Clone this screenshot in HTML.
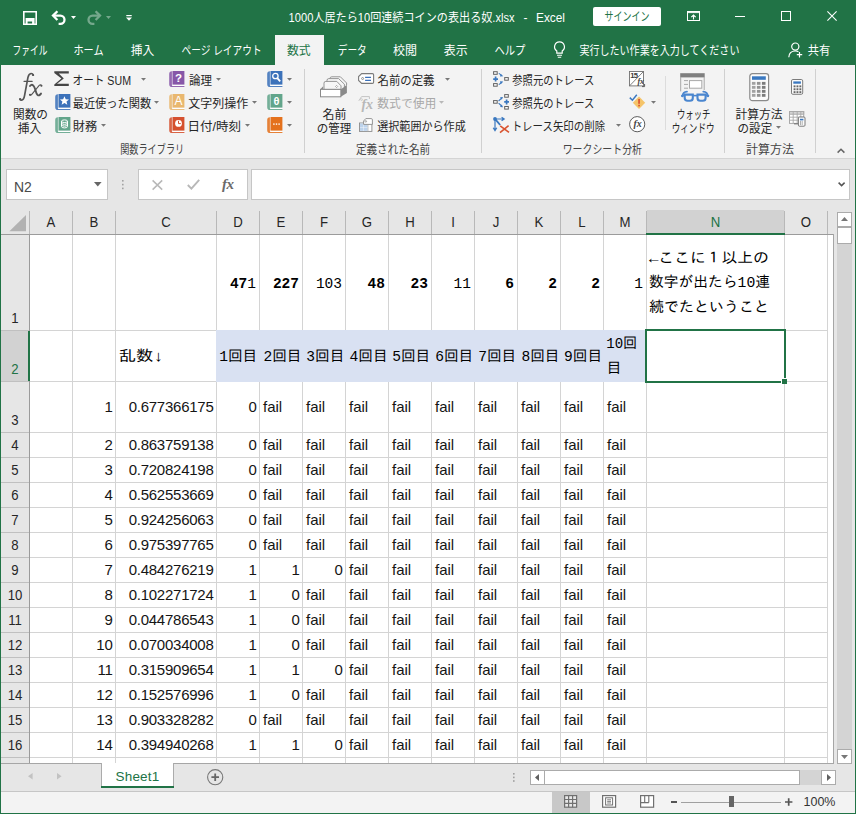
<!DOCTYPE html>
<html lang="ja"><head><meta charset="utf-8"><title>Excel</title>
<style>
html,body{margin:0;padding:0;background:#e6e6e6;}
body{width:856px;height:814px;overflow:hidden;font-family:"Liberation Sans",sans-serif;}
#app{position:relative;width:856px;height:814px;overflow:hidden;background:#e6e6e6;}
#app div,#app svg,#app span.h{position:absolute;box-sizing:border-box;}
#app svg{overflow:visible;}
.t{white-space:nowrap;color:#151515;font-size:15px;}
.r{text-align:right;}
.c{text-align:center;}
.h{color:transparent;overflow:hidden;white-space:nowrap;pointer-events:none;}
#jp{pointer-events:none;}
#jp text{font-family:"Liberation Sans","Noto Sans CJK JP",sans-serif;font-size:12px;white-space:pre;}
#jp text.m{font-family:"Liberation Mono","IPAGothic","Noto Sans CJK JP",monospace;font-size:15px;fill:#000;}

</style></head>
<body>
<div id="app">
<div style="left:0px;top:0px;width:856px;height:65px;background:#217346"></div>
<div style="left:275px;top:35px;width:49px;height:30px;background:#f3f3f3"></div>
<div style="left:1px;top:65px;width:854px;height:93px;background:#f3f3f3"></div>
<div style="left:1px;top:158px;width:854px;height:1px;background:#d4d4d4"></div>
<svg style="left:23px;top:11px" width="14" height="14" viewBox="0 0 14 14" ><path d="M0.8 0.8H13.2V13.2H0.8Z" fill="none" stroke="#fff" stroke-width="1.6"/><path d="M2.6 13.4V7H11.6V13.4H9.1V10.4H4.6V13.4Z" fill="#fff"/></svg>
<svg style="left:51px;top:10px" width="16" height="15" viewBox="0 0 16 15" ><path d="M2.4 5.6H9.4A4.1 4.1 0 0 1 9.4 13.8H7.6" fill="none" stroke="#fff" stroke-width="2.3"/><path d="M6.4 1.2L2 5.6L6.4 10" fill="none" stroke="#fff" stroke-width="2.3"/></svg>
<svg style="left:71px;top:15.9px" width="5" height="3" viewBox="0 0 5 3" ><path d="M0 0H5L2.5 3Z" fill="#fff"/></svg>
<svg style="left:86px;top:10px" width="16" height="15" viewBox="0 0 16 15" ><g opacity="0.38"><path d="M13.6 5.6H6.6A4.1 4.1 0 0 0 6.6 13.8H8.4" fill="none" stroke="#fff" stroke-width="2.3"/><path d="M9.6 1.2L14 5.6L9.6 10" fill="none" stroke="#fff" stroke-width="2.3"/></g></svg>
<svg style="left:106px;top:15.9px" width="5" height="3" viewBox="0 0 5 3" ><path d="M0 0H5L2.5 3Z" fill="#fff" opacity="0.38"/></svg>
<svg style="left:125.5px;top:15px" width="6" height="6" viewBox="0 0 6 6" ><rect x="0.3" y="0" width="5.4" height="1.2" fill="#fff"/><path d="M0 2.6H6L3 5.8Z" fill="#fff"/></svg>
<div style="left:593px;top:7px;width:68px;height:19px;background:#fff;border-radius:2px"></div>
<svg style="left:687px;top:11px" width="13" height="10" viewBox="0 0 13 10" ><rect x="0.5" y="0.5" width="12" height="9" fill="none" stroke="#fff"/><rect x="0.5" y="0.5" width="12" height="1.6" fill="#fff" opacity="0.9"/><path d="M6.5 8.5V4.2M4.3 6.2L6.5 4L8.7 6.2" fill="none" stroke="#fff" stroke-width="1.1"/></svg>
<svg style="left:735px;top:16px" width="10" height="1" viewBox="0 0 10 1" ><rect width="10" height="1" fill="#fff"/></svg>
<svg style="left:781px;top:11px" width="10" height="10" viewBox="0 0 10 10" ><rect x="0.5" y="0.5" width="9" height="9" fill="none" stroke="#fff"/></svg>
<svg style="left:827px;top:11px" width="10" height="10" viewBox="0 0 10 10" ><path d="M0.4 0.4L9.6 9.6M9.6 0.4L0.4 9.6" stroke="#fff" stroke-width="1.1" fill="none"/></svg>
<svg style="left:553px;top:41px" width="13" height="17" viewBox="0 0 13 17" ><path d="M6.5 0.9A4.9 4.9 0 0 0 3.8 9.9V12.2H9.2V9.9A4.9 4.9 0 0 0 6.5 0.9Z" fill="none" stroke="#fff" stroke-width="1.2"/><path d="M4 14.2H9M4.8 16.2H8.2" stroke="#fff" stroke-width="1.1"/></svg>
<svg style="left:788px;top:42px" width="15" height="16" viewBox="0 0 15 16" ><circle cx="7.3" cy="4.6" r="3.6" fill="none" stroke="#fff" stroke-width="1.2"/><path d="M0.8 15.2C1 10.8 3.6 9 7.3 9C8.6 9 9.6 9.2 10.4 9.6" fill="none" stroke="#fff" stroke-width="1.2"/><path d="M11.5 10V15.4M8.8 12.7H14.2" stroke="#fff" stroke-width="1.2"/></svg>
<svg style="left:18px;top:72px" width="26" height="30" viewBox="0 0 26 30" ><g fill="none" stroke="#555" stroke-linecap="round"><path d="M15.3 3.1Q14.6 1.4 13 1.5Q10.8 1.7 9.9 5.6L6.6 23.4Q5.8 28 3.6 28.2Q2.3 28.3 1.9 27.2" stroke-width="1.7"/><path d="M6 9.3H14.2" stroke-width="1.2"/><path d="M12 14Q13.4 12 15.2 13.4Q16.4 14.6 17.4 18Q18.4 22 19.6 23Q21.2 24.2 23 21.6" stroke-width="1.9"/><path d="M23.6 13.7Q22.6 12.2 21.2 13.4L14 22.2Q12.8 23.8 11.8 22.8" stroke-width="1.1"/></g><circle cx="15" cy="3" r="1.1" fill="#555"/><circle cx="2.2" cy="27" r="1.1" fill="#555"/><circle cx="23.4" cy="13.7" r="1.05" fill="#555"/><circle cx="12" cy="22.7" r="1.05" fill="#555"/></svg>
<svg style="left:54px;top:71px" width="15" height="15.2" viewBox="0 0 15 15.2" ><path d="M0.3 0.2H14.8V2.4H4.8L9.8 7.5L3 12.8H14.8V15.1H0.3V13.6L7.4 7.5L0.3 1.9Z" fill="#454545"/></svg>
<svg style="left:141px;top:78.1px" width="5" height="3" viewBox="0 0 5 3" ><path d="M0 0H5L2.5 2.8Z" fill="#777"/></svg>
<svg style="left:55px;top:94px" width="16" height="16" viewBox="0 0 16 16" ><path d="M2.9 0.2Q0.2 0.2 0.2 2.9V13.2Q0.2 16 3 16H15.4V15H3.6Q2.9 15 2.9 14.2Z" fill="#3c72ba" opacity="0.88"/><rect x="3.5" y="13.6" width="11.9" height="1.4" fill="#fff"/><rect x="3.5" y="0" width="11.9" height="13.6" fill="#3c72ba"/><path d="M9.45 2.2L10.75 5.3L14 5.5L11.5 7.6L12.3 10.8L9.45 9.1L6.6 10.8L7.4 7.6L4.9 5.5L8.15 5.3Z" fill="#fff"/></svg>
<svg style="left:154px;top:101.1px" width="5" height="3" viewBox="0 0 5 3" ><path d="M0 0H5L2.5 2.8Z" fill="#777"/></svg>
<svg style="left:54.6px;top:117px" width="16" height="16" viewBox="0 0 16 16" ><path d="M2.9 0.2Q0.2 0.2 0.2 2.9V13.2Q0.2 16 3 16H15.4V15H3.6Q2.9 15 2.9 14.2Z" fill="#62a58b" opacity="0.88"/><rect x="3.5" y="13.6" width="11.9" height="1.4" fill="#fff"/><rect x="3.5" y="0" width="11.9" height="13.6" fill="#62a58b"/><g fill="none" stroke="#fff" stroke-width="1"><ellipse cx="9.5" cy="4.2" rx="3" ry="1.3"/><path d="M6.5 4.2V9.6A3 1.3 0 0 0 12.5 9.6V4.2M6.5 6A3 1.3 0 0 0 12.5 6M6.5 7.8A3 1.3 0 0 0 12.5 7.8"/></g></svg>
<svg style="left:101px;top:124.1px" width="5" height="3" viewBox="0 0 5 3" ><path d="M0 0H5L2.5 2.8Z" fill="#777"/></svg>
<svg style="left:169px;top:70.9px" width="16" height="16" viewBox="0 0 16 16" ><path d="M2.9 0.2Q0.2 0.2 0.2 2.9V13.2Q0.2 16 3 16H15.4V15H3.6Q2.9 15 2.9 14.2Z" fill="#8757a8" opacity="0.88"/><rect x="3.5" y="13.6" width="11.9" height="1.4" fill="#fff"/><rect x="3.5" y="0" width="11.9" height="13.6" fill="#8757a8"/><text x="9.5" y="10.8" font-family="Liberation Sans" font-weight="bold" font-size="11.5" fill="#fff" text-anchor="middle">?</text></svg>
<svg style="left:216px;top:78.1px" width="5" height="3" viewBox="0 0 5 3" ><path d="M0 0H5L2.5 2.8Z" fill="#777"/></svg>
<svg style="left:169px;top:94px" width="16" height="16" viewBox="0 0 16 16" ><path d="M2.9 0.2Q0.2 0.2 0.2 2.9V13.2Q0.2 16 3 16H15.4V15H3.6Q2.9 15 2.9 14.2Z" fill="#e9b76e" opacity="0.88"/><rect x="3.5" y="13.6" width="11.9" height="1.4" fill="#fff"/><rect x="3.5" y="0" width="11.9" height="13.6" fill="#e9b76e"/><text x="9.5" y="10.9" font-family="Liberation Sans" font-size="12" fill="#fff" text-anchor="middle">A</text></svg>
<svg style="left:252px;top:101.1px" width="5" height="3" viewBox="0 0 5 3" ><path d="M0 0H5L2.5 2.8Z" fill="#777"/></svg>
<svg style="left:169px;top:117px" width="16" height="16" viewBox="0 0 16 16" ><path d="M2.9 0.2Q0.2 0.2 0.2 2.9V13.2Q0.2 16 3 16H15.4V15H3.6Q2.9 15 2.9 14.2Z" fill="#d5502e" opacity="0.88"/><rect x="3.5" y="13.6" width="11.9" height="1.4" fill="#fff"/><rect x="3.5" y="0" width="11.9" height="13.6" fill="#d5502e"/><circle cx="9.5" cy="6.4" r="3.4" fill="#fff"/><path d="M9.5 3.8V6.6H11.8" fill="none" stroke="#d5502e" stroke-width="1"/></svg>
<svg style="left:245px;top:124.1px" width="5" height="3" viewBox="0 0 5 3" ><path d="M0 0H5L2.5 2.8Z" fill="#777"/></svg>
<svg style="left:267px;top:70.9px" width="16" height="16" viewBox="0 0 16 16" ><path d="M2.9 0.2Q0.2 0.2 0.2 2.9V13.2Q0.2 16 3 16H15.4V15H3.6Q2.9 15 2.9 14.2Z" fill="#3c72ba" opacity="0.88"/><rect x="3.5" y="13.6" width="11.9" height="1.4" fill="#fff"/><rect x="3.5" y="0" width="11.9" height="13.6" fill="#3c72ba"/><circle cx="8.4" cy="5" r="2.7" fill="none" stroke="#fff" stroke-width="1.3"/><path d="M10.3 7.1L13.2 10.4" stroke="#fff" stroke-width="1.8"/></svg>
<svg style="left:287px;top:78.1px" width="5" height="3" viewBox="0 0 5 3" ><path d="M0 0H5L2.5 2.8Z" fill="#777"/></svg>
<svg style="left:267px;top:94px" width="16" height="16" viewBox="0 0 16 16" ><path d="M2.9 0.2Q0.2 0.2 0.2 2.9V13.2Q0.2 16 3 16H15.4V15H3.6Q2.9 15 2.9 14.2Z" fill="#62a58b" opacity="0.88"/><rect x="3.5" y="13.6" width="11.9" height="1.4" fill="#fff"/><rect x="3.5" y="0" width="11.9" height="13.6" fill="#62a58b"/><text x="9.5" y="10.9" font-family="Liberation Sans" font-weight="bold" font-size="11" fill="#fff" text-anchor="middle">θ</text></svg>
<svg style="left:287px;top:101.1px" width="5" height="3" viewBox="0 0 5 3" ><path d="M0 0H5L2.5 2.8Z" fill="#777"/></svg>
<svg style="left:267px;top:117px" width="16" height="16" viewBox="0 0 16 16" ><path d="M2.9 0.2Q0.2 0.2 0.2 2.9V13.2Q0.2 16 3 16H15.4V15H3.6Q2.9 15 2.9 14.2Z" fill="#e4711c" opacity="0.88"/><rect x="3.5" y="13.6" width="11.9" height="1.4" fill="#fff"/><rect x="3.5" y="0" width="11.9" height="13.6" fill="#e4711c"/><rect x="6.2" y="6.4" width="1.4" height="1.4" fill="#fff"/><rect x="8.8" y="6.4" width="1.4" height="1.4" fill="#fff"/><rect x="11.4" y="6.4" width="1.4" height="1.4" fill="#fff"/></svg>
<svg style="left:287px;top:124.1px" width="5" height="3" viewBox="0 0 5 3" ><path d="M0 0H5L2.5 2.8Z" fill="#777"/></svg>
<div style="left:304px;top:69px;width:1px;height:84px;background:#d0d0d0"></div>
<svg style="left:320px;top:76px" width="28" height="22" viewBox="0 0 28 22" ><g fill="#f6f6f6" stroke="#8a8a8a" stroke-width="0.9"><path d="M10 4V2.6Q10 0.8 11.8 0.8H20.4L26.6 7V9"/><path d="M7 6.5V4.4Q7 2.6 8.8 2.6H18.6L24.4 8.2V11"/><path d="M4 13.4V7.2Q4 5.4 5.8 5.4H16.8L21 9.8V13.4Z"/></g><path d="M16.6 9.4L17.7 10.5L16.6 11.6L15.5 10.5Z" fill="#fff" stroke="#8a8a8a" stroke-width="0.7"/><path d="M20.8 13.4L26.9 8.7V17L20.8 20.8Z" fill="#8a8a8a"/><path d="M0.5 13L3.2 10.2V13Z" fill="#8a8a8a"/><rect x="0.5" y="13.4" width="20.3" height="7.4" fill="#fff" stroke="#8a8a8a" stroke-width="1"/></svg>
<svg style="left:358px;top:73px" width="16.5" height="11" viewBox="0 0 16.5 11" ><path d="M3.7 0.6H14.4Q15.6 0.6 15.6 1.8V9.2Q15.6 10.4 14.4 10.4H3.7L0.6 7.4V3.6Z" fill="#fff" stroke="#7a7a7a" stroke-width="1.1"/><circle cx="4.6" cy="5.5" r="1" fill="none" stroke="#7a7a7a" stroke-width="0.8"/><path d="M7.1 4.4H13M7.1 7.3H13" stroke="#3c72ba" stroke-width="1.3"/></svg>
<svg style="left:445px;top:78.1px" width="5" height="3" viewBox="0 0 5 3" ><path d="M0 0H5L2.5 2.8Z" fill="#777"/></svg>
<svg style="left:358px;top:95.5px" width="16" height="15" viewBox="0 0 16 15" ><g><path d="M0.8 4.8L3.6 0.6H11.4V3" fill="none" stroke="#c4c4c4"/><circle cx="3.6" cy="3.6" r="0.9" fill="none" stroke="#c4c4c4" stroke-width="0.8"/><text x="3.4" y="12.8" font-family="Liberation Serif" font-style="italic" font-weight="bold" font-size="14" fill="#b8b8b8">fx</text></g></svg>
<svg style="left:439.25px;top:101.1px" width="5" height="3" viewBox="0 0 5 3" ><path d="M0 0H5L2.5 2.8Z" fill="#b8b8b8"/></svg>
<svg style="left:359px;top:118px" width="14" height="14" viewBox="0 0 14 14" ><rect x="0.5" y="5" width="12.4" height="8.4" fill="#fff" stroke="#8a8a8a" stroke-width="0.9"/><rect x="1" y="5.5" width="3.6" height="3.5" fill="#bdd3ec"/><rect x="5" y="5.5" width="3.6" height="3.5" fill="#bdd3ec"/><rect x="1" y="9.4" width="3.6" height="3.5" fill="#bdd3ec"/><rect x="5" y="9.4" width="3.6" height="3.5" fill="#bdd3ec"/><path d="M9 5V13.4" stroke="#b0b0b0" stroke-width="0.7"/><path d="M4.6 6.4V3L6.8 0.6H12.2Q13.4 0.6 13.4 1.8V6.4Z" fill="#fff" stroke="#8a8a8a" stroke-width="0.9"/><circle cx="6.8" cy="3.4" r="0.8" fill="none" stroke="#8a8a8a" stroke-width="0.7"/></svg>
<div style="left:481px;top:69px;width:1px;height:84px;background:#d0d0d0"></div>
<svg style="left:493px;top:71px" width="16" height="16" viewBox="0 0 16 16" ><rect x="0.6" y="0.7" width="3.6" height="2.6" fill="#fff" stroke="#606060" stroke-width="1"/><rect x="0.6" y="12.6" width="3.6" height="2.6" fill="#fff" stroke="#606060" stroke-width="1"/><rect x="11.7" y="6.6" width="3.6" height="2.6" fill="#fff" stroke="#606060" stroke-width="1"/><path d="M5.8 2.4L9.2 4.6M5.8 13.6L9.2 11.2" stroke="#3a78c0" stroke-width="1.1"/><path d="M7.6 3L10.2 5.2L7 5.6ZM7.6 13L10.2 10.6L7 10.2Z" fill="#3a78c0"/><path d="M2.6 5.6V10.6M0.2 8.1H5" stroke="#3a78c0" stroke-width="1.7"/></svg>
<svg style="left:493px;top:94px" width="16" height="16" viewBox="0 0 16 16" ><rect x="0.6" y="6.6" width="3.6" height="2.6" fill="#fff" stroke="#606060" stroke-width="1"/><rect x="11.7" y="0.6" width="3.6" height="2.6" fill="#fff" stroke="#606060" stroke-width="1"/><rect x="11.7" y="12.5" width="3.6" height="2.6" fill="#fff" stroke="#606060" stroke-width="1"/><path d="M5.6 7L8.6 4.2M5.6 9.2L8.6 12" stroke="#3a78c0" stroke-width="1.1"/><path d="M7 3.2L10 3L8.8 5.8ZM7 13L10 13.2L8.8 10.4Z" fill="#3a78c0"/><path d="M13.6 5.4V10.4M11.2 7.9H16" stroke="#3a78c0" stroke-width="1.7"/></svg>
<svg style="left:493px;top:117px" width="16.5" height="16" viewBox="0 0 16.5 16" ><circle cx="2" cy="2" r="1.9" fill="#3a78c0"/><path d="M2 2H10.4M8.6 0.2L11.2 2L8.6 3.8M2 2V13M0.2 10.8L2 13.6L3.8 10.8" fill="none" stroke="#3a78c0" stroke-width="1.2"/><path d="M2.4 2.4L7.2 8" stroke="#3a78c0" stroke-width="1.8"/><path d="M7.2 8.8L16 15.4M15.6 8.6L7 15.6" stroke="#d9532f" stroke-width="1.6"/></svg>
<svg style="left:616.25px;top:124.1px" width="5" height="3" viewBox="0 0 5 3" ><path d="M0 0H5L2.5 2.8Z" fill="#777"/></svg>
<svg style="left:629.4px;top:71px" width="17" height="16" viewBox="0 0 17 16" ><rect x="0.5" y="0.5" width="14" height="14.4" fill="#fff" stroke="#707070" stroke-width="0.9"/><path d="M0.5 14.9L14.5 0.5" stroke="#707070" stroke-width="0.9"/><text x="1.2" y="7.2" font-family="Liberation Sans" font-size="7.6" font-weight="bold" fill="#3a3a3a" letter-spacing="-0.6">15</text><text x="8.4" y="13.4" font-family="Liberation Serif" font-style="italic" font-size="8" font-weight="bold" fill="#3a3a3a">fx</text><path d="M13 15.6H15.6V13" fill="none" stroke="#5a5a5a" stroke-width="1"/></svg>
<svg style="left:629px;top:94px" width="17" height="16" viewBox="0 0 17 16" ><path d="M0.8 3.6L3.4 6.2L7.8 0.8" fill="none" stroke="#3a78c0" stroke-width="1.5"/><path d="M10 2.6L16.2 8.8L10 15L3.8 8.8Z" fill="#f5c469"/><rect x="9.3" y="5" width="1.5" height="4.8" fill="#d9452b"/><rect x="9.3" y="10.8" width="1.5" height="1.6" fill="#d9452b"/></svg>
<svg style="left:651.25px;top:101.1px" width="5" height="3" viewBox="0 0 5 3" ><path d="M0 0H5L2.5 2.8Z" fill="#777"/></svg>
<svg style="left:629px;top:116.4px" width="16.4" height="16.4" viewBox="0 0 16.4 16.4" ><circle cx="8.2" cy="8.2" r="7.6" fill="#fff" stroke="#5a5a5a" stroke-width="1"/><text x="4.4" y="11.4" font-family="Liberation Serif" font-style="italic" font-weight="bold" font-size="10" fill="#444">fx</text></svg>
<div style="left:665px;top:76px;width:1px;height:54px;background:#dcdcdc"></div>
<svg style="left:680px;top:73px" width="30" height="29" viewBox="0 0 30 29" ><rect x="0.2" y="0.2" width="24.5" height="4.2" fill="#7f7f7f"/><path d="M0.7 4V18.4M24.2 4V17" stroke="#a8a8a8" fill="none"/><rect x="9.5" y="7.6" width="12.3" height="7.6" fill="#fff" stroke="#a8a8a8"/><path d="M4 7.6H8M4 11.4H8M4 15.2H8" stroke="#a8a8a8"/><g fill="#f3f3f3" stroke="#4a86cf" stroke-width="2.1"><path d="M4.7 21.6H12.8V25Q12.8 27.8 10 27.8H7.5Q4.7 27.8 4.7 25Z"/><path d="M17.5 21.6H25.6V25Q25.6 27.8 22.8 27.8H20.3Q17.5 27.8 17.5 25Z"/></g><path d="M12.8 22.6H17.5" stroke="#4a86cf" stroke-width="1.6"/><path d="M2.4 23.4Q2.8 18.8 7 18.6M27.9 23.4Q27.5 18.8 23.3 18.6" fill="none" stroke="#4a86cf" stroke-width="1.8" stroke-linecap="round"/><path d="M1.2 23L4.7 22.4M29.1 23L25.6 22.4" stroke="#4a86cf" stroke-width="1.8"/></svg>
<div style="left:724px;top:69px;width:1px;height:84px;background:#d0d0d0"></div>
<svg style="left:749px;top:73px" width="21" height="28.5" viewBox="0 0 21 28.5" ><rect x="0.8" y="0.7" width="18.8" height="27" rx="2.6" fill="#fbfbfb" stroke="#8a8a8a" stroke-width="1.2"/><rect x="3" y="3.3" width="13.8" height="3.5" fill="#3a78c0"/><rect x="2.9" y="8.9" width="3.6" height="2.9" fill="#a2a2a2"/><rect x="2.9" y="12.9" width="3.6" height="2.9" fill="#a2a2a2"/><rect x="2.9" y="16.9" width="3.6" height="2.9" fill="#a2a2a2"/><rect x="2.9" y="20.9" width="3.6" height="2.9" fill="#a2a2a2"/><rect x="7.9" y="8.9" width="3.6" height="2.9" fill="#939393"/><rect x="7.9" y="12.9" width="3.6" height="2.9" fill="#939393"/><rect x="7.9" y="16.9" width="3.6" height="2.9" fill="#939393"/><rect x="7.9" y="20.9" width="3.6" height="2.9" fill="#939393"/><rect x="12.9" y="8.9" width="3.6" height="2.9" fill="#7c7c7c"/><rect x="12.9" y="12.9" width="3.6" height="2.9" fill="#7c7c7c"/><rect x="12.9" y="16.9" width="3.6" height="2.9" fill="#7c7c7c"/><rect x="12.9" y="20.9" width="3.6" height="2.9" fill="#7c7c7c"/></svg>
<svg style="left:776.25px;top:126.1px" width="5" height="3" viewBox="0 0 5 3" ><path d="M0 0H5L2.5 2.8Z" fill="#777"/></svg>
<svg style="left:791px;top:79px" width="12.2" height="16" viewBox="0 0 12.2 16" ><rect x="0.5" y="0.5" width="11.2" height="14.8" rx="1.4" fill="#fbfbfb" stroke="#7a7a7a"/><rect x="2.3" y="2.4" width="7.6" height="2.3" fill="#3a78c0"/><rect x="2.6" y="6.4" width="1.9" height="1.9" fill="#666"/><rect x="2.6" y="9.3" width="1.9" height="1.9" fill="#666"/><rect x="2.6" y="12.2" width="1.9" height="1.9" fill="#666"/><rect x="5.5" y="6.4" width="1.9" height="1.9" fill="#666"/><rect x="5.5" y="9.3" width="1.9" height="1.9" fill="#666"/><rect x="5.5" y="12.2" width="1.9" height="1.9" fill="#666"/><rect x="8.4" y="6.4" width="1.9" height="1.9" fill="#666"/><rect x="8.4" y="9.3" width="1.9" height="1.9" fill="#666"/><rect x="8.4" y="12.2" width="1.9" height="1.9" fill="#666"/></svg>
<svg style="left:789px;top:110.5px" width="17" height="16" viewBox="0 0 17 16" ><rect x="0.5" y="0.6" width="14.2" height="11.8" fill="#fff" stroke="#a8a8a8"/><rect x="0.5" y="0.6" width="14.2" height="2.6" fill="#d8d8d8" stroke="#a8a8a8"/><path d="M4.2 0.6V12.4M8.2 0.6V12.4M11.8 0.6V12.4M0.5 6.2H14.7M0.5 9.2H14.7" stroke="#a8a8a8" stroke-width="0.9"/><path d="M5 12.8H9" stroke="#7a7a7a" stroke-width="1.2"/><rect x="9.4" y="6" width="6.6" height="9.2" rx="1" fill="#fbfbfb" stroke="#7a7a7a"/><rect x="11" y="7.8" width="3.4" height="1.6" fill="#3a78c0"/><path d="M11 11H14.4M11 13H14.4" stroke="#666" stroke-width="1" stroke-dasharray="1 0.7"/></svg>
<div style="left:815px;top:69px;width:1px;height:84px;background:#d0d0d0"></div>
<svg style="left:836.5px;top:147.5px" width="8" height="5" viewBox="0 0 8 5" ><path d="M0.6 4.6L4 1.2L7.4 4.6" fill="none" stroke="#666" stroke-width="1.5"/></svg>
<div style="left:6px;top:169px;width:102px;height:31px;background:#fff;border:1px solid #c6c6c6"></div>
<div class="t" style="left:14px;top:177.8px;width:40px;height:18px;line-height:18px;font-size:15.5px;transform:scaleX(0.9);transform-origin:0 50%;color:#4a4a4a">N2</div>
<svg style="left:94px;top:182px" width="8" height="5" viewBox="0 0 8 5" ><path d="M0 0H7.6L3.8 4.4Z" fill="#666"/></svg>
<svg style="left:122px;top:179.5px" width="2" height="10" viewBox="0 0 2 10" ><rect x="0" y="0" width="1.6" height="1.6" fill="#a2a2a2"/><rect x="0" y="3.8" width="1.6" height="1.6" fill="#a2a2a2"/><rect x="0" y="7.6" width="1.6" height="1.6" fill="#a2a2a2"/></svg>
<div style="left:138px;top:169px;width:110px;height:31px;background:#fff;border:1px solid #c6c6c6"></div>
<svg style="left:152px;top:179.5px" width="11" height="10" viewBox="0 0 11 10" ><path d="M0.6 0.4L10.2 9.6M10.2 0.4L0.6 9.6" stroke="#b8b8b8" stroke-width="1.5" fill="none"/></svg>
<svg style="left:187px;top:179px" width="13" height="11" viewBox="0 0 13 11" ><path d="M0.8 6L4.4 9.6L12.2 0.8" stroke="#b8b8b8" stroke-width="1.9" fill="none"/></svg>
<div class="t" style="left:222px;top:174px;width:16px;height:20px;line-height:20px;font-family:'Liberation Serif',serif;font-style:italic;font-weight:bold;font-size:15px;color:#6a6a6a;letter-spacing:-0.5px">fx</div>
<div style="left:251px;top:169px;width:599px;height:31px;background:#fff;border:1px solid #c6c6c6"></div>
<svg style="left:838px;top:182px" width="8" height="5" viewBox="0 0 8 5" ><path d="M0.6 0.6L3.6 3.6L6.6 0.6" fill="none" stroke="#555" stroke-width="1.5"/></svg>
<div style="left:30px;top:235px;width:804px;height:528px;background:#fff"></div>
<div style="left:72px;top:235px;width:1px;height:528px;background:#d4d4d4"></div>
<div style="left:115px;top:235px;width:1px;height:528px;background:#d4d4d4"></div>
<div style="left:216px;top:235px;width:1px;height:528px;background:#d4d4d4"></div>
<div style="left:259px;top:235px;width:1px;height:96px;background:#d4d4d4"></div>
<div style="left:259px;top:381px;width:1px;height:382px;background:#d4d4d4"></div>
<div style="left:302px;top:235px;width:1px;height:96px;background:#d4d4d4"></div>
<div style="left:302px;top:381px;width:1px;height:382px;background:#d4d4d4"></div>
<div style="left:345px;top:235px;width:1px;height:96px;background:#d4d4d4"></div>
<div style="left:345px;top:381px;width:1px;height:382px;background:#d4d4d4"></div>
<div style="left:388px;top:235px;width:1px;height:96px;background:#d4d4d4"></div>
<div style="left:388px;top:381px;width:1px;height:382px;background:#d4d4d4"></div>
<div style="left:431px;top:235px;width:1px;height:96px;background:#d4d4d4"></div>
<div style="left:431px;top:381px;width:1px;height:382px;background:#d4d4d4"></div>
<div style="left:474px;top:235px;width:1px;height:96px;background:#d4d4d4"></div>
<div style="left:474px;top:381px;width:1px;height:382px;background:#d4d4d4"></div>
<div style="left:517px;top:235px;width:1px;height:96px;background:#d4d4d4"></div>
<div style="left:517px;top:381px;width:1px;height:382px;background:#d4d4d4"></div>
<div style="left:560px;top:235px;width:1px;height:96px;background:#d4d4d4"></div>
<div style="left:560px;top:381px;width:1px;height:382px;background:#d4d4d4"></div>
<div style="left:603px;top:235px;width:1px;height:96px;background:#d4d4d4"></div>
<div style="left:603px;top:381px;width:1px;height:382px;background:#d4d4d4"></div>
<div style="left:646px;top:235px;width:1px;height:528px;background:#d4d4d4"></div>
<div style="left:784px;top:235px;width:1px;height:528px;background:#d4d4d4"></div>
<div style="left:827px;top:235px;width:1px;height:528px;background:#d4d4d4"></div>
<div style="left:30px;top:330px;width:804px;height:1px;background:#d4d4d4"></div>
<div style="left:30px;top:381px;width:804px;height:1px;background:#d4d4d4"></div>
<div style="left:30px;top:432px;width:804px;height:1px;background:#d4d4d4"></div>
<div style="left:30px;top:457px;width:804px;height:1px;background:#d4d4d4"></div>
<div style="left:30px;top:482px;width:804px;height:1px;background:#d4d4d4"></div>
<div style="left:30px;top:507px;width:804px;height:1px;background:#d4d4d4"></div>
<div style="left:30px;top:532px;width:804px;height:1px;background:#d4d4d4"></div>
<div style="left:30px;top:557px;width:804px;height:1px;background:#d4d4d4"></div>
<div style="left:30px;top:582px;width:804px;height:1px;background:#d4d4d4"></div>
<div style="left:30px;top:607px;width:804px;height:1px;background:#d4d4d4"></div>
<div style="left:30px;top:632px;width:804px;height:1px;background:#d4d4d4"></div>
<div style="left:30px;top:657px;width:804px;height:1px;background:#d4d4d4"></div>
<div style="left:30px;top:682px;width:804px;height:1px;background:#d4d4d4"></div>
<div style="left:30px;top:707px;width:804px;height:1px;background:#d4d4d4"></div>
<div style="left:30px;top:732px;width:804px;height:1px;background:#d4d4d4"></div>
<div style="left:30px;top:757px;width:804px;height:1px;background:#d4d4d4"></div>
<div style="left:216px;top:330px;width:430px;height:52px;background:#d9e1f2"></div>
<div style="left:30px;top:210px;width:42px;height:24px;background:#e6e6e6"></div>
<div style="left:72px;top:211px;width:1px;height:23px;background:#b8b8b8"></div>
<div class="t c" style="left:30px;top:212px;width:42px;height:20px;line-height:20px;font-size:15px;transform:scaleX(0.88);color:#262626">A</div>
<div style="left:73px;top:210px;width:42px;height:24px;background:#e6e6e6"></div>
<div style="left:115px;top:211px;width:1px;height:23px;background:#b8b8b8"></div>
<div class="t c" style="left:73px;top:212px;width:42px;height:20px;line-height:20px;font-size:15px;transform:scaleX(0.88);color:#262626">B</div>
<div style="left:116px;top:210px;width:100px;height:24px;background:#e6e6e6"></div>
<div style="left:216px;top:211px;width:1px;height:23px;background:#b8b8b8"></div>
<div class="t c" style="left:116px;top:212px;width:100px;height:20px;line-height:20px;font-size:15px;transform:scaleX(0.88);color:#262626">C</div>
<div style="left:217px;top:210px;width:42px;height:24px;background:#e6e6e6"></div>
<div style="left:259px;top:211px;width:1px;height:23px;background:#b8b8b8"></div>
<div class="t c" style="left:217px;top:212px;width:42px;height:20px;line-height:20px;font-size:15px;transform:scaleX(0.88);color:#262626">D</div>
<div style="left:260px;top:210px;width:42px;height:24px;background:#e6e6e6"></div>
<div style="left:302px;top:211px;width:1px;height:23px;background:#b8b8b8"></div>
<div class="t c" style="left:260px;top:212px;width:42px;height:20px;line-height:20px;font-size:15px;transform:scaleX(0.88);color:#262626">E</div>
<div style="left:303px;top:210px;width:42px;height:24px;background:#e6e6e6"></div>
<div style="left:345px;top:211px;width:1px;height:23px;background:#b8b8b8"></div>
<div class="t c" style="left:303px;top:212px;width:42px;height:20px;line-height:20px;font-size:15px;transform:scaleX(0.88);color:#262626">F</div>
<div style="left:346px;top:210px;width:42px;height:24px;background:#e6e6e6"></div>
<div style="left:388px;top:211px;width:1px;height:23px;background:#b8b8b8"></div>
<div class="t c" style="left:346px;top:212px;width:42px;height:20px;line-height:20px;font-size:15px;transform:scaleX(0.88);color:#262626">G</div>
<div style="left:389px;top:210px;width:42px;height:24px;background:#e6e6e6"></div>
<div style="left:431px;top:211px;width:1px;height:23px;background:#b8b8b8"></div>
<div class="t c" style="left:389px;top:212px;width:42px;height:20px;line-height:20px;font-size:15px;transform:scaleX(0.88);color:#262626">H</div>
<div style="left:432px;top:210px;width:42px;height:24px;background:#e6e6e6"></div>
<div style="left:474px;top:211px;width:1px;height:23px;background:#b8b8b8"></div>
<div class="t c" style="left:432px;top:212px;width:42px;height:20px;line-height:20px;font-size:15px;transform:scaleX(0.88);color:#262626">I</div>
<div style="left:475px;top:210px;width:42px;height:24px;background:#e6e6e6"></div>
<div style="left:517px;top:211px;width:1px;height:23px;background:#b8b8b8"></div>
<div class="t c" style="left:475px;top:212px;width:42px;height:20px;line-height:20px;font-size:15px;transform:scaleX(0.88);color:#262626">J</div>
<div style="left:518px;top:210px;width:42px;height:24px;background:#e6e6e6"></div>
<div style="left:560px;top:211px;width:1px;height:23px;background:#b8b8b8"></div>
<div class="t c" style="left:518px;top:212px;width:42px;height:20px;line-height:20px;font-size:15px;transform:scaleX(0.88);color:#262626">K</div>
<div style="left:561px;top:210px;width:42px;height:24px;background:#e6e6e6"></div>
<div style="left:603px;top:211px;width:1px;height:23px;background:#b8b8b8"></div>
<div class="t c" style="left:561px;top:212px;width:42px;height:20px;line-height:20px;font-size:15px;transform:scaleX(0.88);color:#262626">L</div>
<div style="left:604px;top:210px;width:42px;height:24px;background:#e6e6e6"></div>
<div style="left:646px;top:211px;width:1px;height:23px;background:#b8b8b8"></div>
<div class="t c" style="left:604px;top:212px;width:42px;height:20px;line-height:20px;font-size:15px;transform:scaleX(0.88);color:#262626">M</div>
<div style="left:647px;top:210px;width:137px;height:24px;background:#d2d2d2"></div>
<div style="left:784px;top:211px;width:1px;height:23px;background:#b8b8b8"></div>
<div class="t c" style="left:647px;top:212px;width:137px;height:20px;line-height:20px;font-size:15px;transform:scaleX(0.88);color:#217346">N</div>
<div style="left:785px;top:210px;width:42px;height:24px;background:#e6e6e6"></div>
<div style="left:827px;top:211px;width:1px;height:23px;background:#b8b8b8"></div>
<div class="t c" style="left:785px;top:212px;width:42px;height:20px;line-height:20px;font-size:15px;transform:scaleX(0.88);color:#262626">O</div>
<div style="left:29px;top:211px;width:1px;height:23px;background:#b8b8b8"></div>
<div style="left:0px;top:234px;width:834px;height:1px;background:#9b9b9b"></div>
<div style="left:646px;top:233px;width:139px;height:2px;background:#217346"></div>
<svg style="left:9px;top:214.5px" width="17" height="16" viewBox="0 0 17 16" ><path d="M17 0V16.2H0.4Z" fill="#b2b2b2"/></svg>
<div style="left:1px;top:235px;width:28px;height:95px;background:#e6e6e6"></div>
<div style="left:1px;top:330px;width:28px;height:1px;background:#c0c0c0"></div>
<div class="t c" style="left:1px;top:308.5px;width:28px;height:18px;line-height:18px;font-size:15.5px;transform:scaleX(0.85);color:#262626">1</div>
<div style="left:1px;top:331px;width:28px;height:50px;background:#d2d2d2"></div>
<div style="left:1px;top:381px;width:28px;height:1px;background:#c0c0c0"></div>
<div class="t c" style="left:1px;top:359.5px;width:28px;height:18px;line-height:18px;font-size:15.5px;transform:scaleX(0.85);color:#217346">2</div>
<div style="left:1px;top:382px;width:28px;height:50px;background:#e6e6e6"></div>
<div style="left:1px;top:432px;width:28px;height:1px;background:#c0c0c0"></div>
<div class="t c" style="left:1px;top:410.5px;width:28px;height:18px;line-height:18px;font-size:15.5px;transform:scaleX(0.85);color:#262626">3</div>
<div style="left:1px;top:433px;width:28px;height:24px;background:#e6e6e6"></div>
<div style="left:1px;top:457px;width:28px;height:1px;background:#c0c0c0"></div>
<div class="t c" style="left:1px;top:435.5px;width:28px;height:18px;line-height:18px;font-size:15.5px;transform:scaleX(0.85);color:#262626">4</div>
<div style="left:1px;top:458px;width:28px;height:24px;background:#e6e6e6"></div>
<div style="left:1px;top:482px;width:28px;height:1px;background:#c0c0c0"></div>
<div class="t c" style="left:1px;top:460.5px;width:28px;height:18px;line-height:18px;font-size:15.5px;transform:scaleX(0.85);color:#262626">5</div>
<div style="left:1px;top:483px;width:28px;height:24px;background:#e6e6e6"></div>
<div style="left:1px;top:507px;width:28px;height:1px;background:#c0c0c0"></div>
<div class="t c" style="left:1px;top:485.5px;width:28px;height:18px;line-height:18px;font-size:15.5px;transform:scaleX(0.85);color:#262626">6</div>
<div style="left:1px;top:508px;width:28px;height:24px;background:#e6e6e6"></div>
<div style="left:1px;top:532px;width:28px;height:1px;background:#c0c0c0"></div>
<div class="t c" style="left:1px;top:510.5px;width:28px;height:18px;line-height:18px;font-size:15.5px;transform:scaleX(0.85);color:#262626">7</div>
<div style="left:1px;top:533px;width:28px;height:24px;background:#e6e6e6"></div>
<div style="left:1px;top:557px;width:28px;height:1px;background:#c0c0c0"></div>
<div class="t c" style="left:1px;top:535.5px;width:28px;height:18px;line-height:18px;font-size:15.5px;transform:scaleX(0.85);color:#262626">8</div>
<div style="left:1px;top:558px;width:28px;height:24px;background:#e6e6e6"></div>
<div style="left:1px;top:582px;width:28px;height:1px;background:#c0c0c0"></div>
<div class="t c" style="left:1px;top:560.5px;width:28px;height:18px;line-height:18px;font-size:15.5px;transform:scaleX(0.85);color:#262626">9</div>
<div style="left:1px;top:583px;width:28px;height:24px;background:#e6e6e6"></div>
<div style="left:1px;top:607px;width:28px;height:1px;background:#c0c0c0"></div>
<div class="t c" style="left:1px;top:585.5px;width:28px;height:18px;line-height:18px;font-size:15.5px;transform:scaleX(0.85);color:#262626">10</div>
<div style="left:1px;top:608px;width:28px;height:24px;background:#e6e6e6"></div>
<div style="left:1px;top:632px;width:28px;height:1px;background:#c0c0c0"></div>
<div class="t c" style="left:1px;top:610.5px;width:28px;height:18px;line-height:18px;font-size:15.5px;transform:scaleX(0.85);color:#262626">11</div>
<div style="left:1px;top:633px;width:28px;height:24px;background:#e6e6e6"></div>
<div style="left:1px;top:657px;width:28px;height:1px;background:#c0c0c0"></div>
<div class="t c" style="left:1px;top:635.5px;width:28px;height:18px;line-height:18px;font-size:15.5px;transform:scaleX(0.85);color:#262626">12</div>
<div style="left:1px;top:658px;width:28px;height:24px;background:#e6e6e6"></div>
<div style="left:1px;top:682px;width:28px;height:1px;background:#c0c0c0"></div>
<div class="t c" style="left:1px;top:660.5px;width:28px;height:18px;line-height:18px;font-size:15.5px;transform:scaleX(0.85);color:#262626">13</div>
<div style="left:1px;top:683px;width:28px;height:24px;background:#e6e6e6"></div>
<div style="left:1px;top:707px;width:28px;height:1px;background:#c0c0c0"></div>
<div class="t c" style="left:1px;top:685.5px;width:28px;height:18px;line-height:18px;font-size:15.5px;transform:scaleX(0.85);color:#262626">14</div>
<div style="left:1px;top:708px;width:28px;height:24px;background:#e6e6e6"></div>
<div style="left:1px;top:732px;width:28px;height:1px;background:#c0c0c0"></div>
<div class="t c" style="left:1px;top:710.5px;width:28px;height:18px;line-height:18px;font-size:15.5px;transform:scaleX(0.85);color:#262626">15</div>
<div style="left:1px;top:733px;width:28px;height:24px;background:#e6e6e6"></div>
<div style="left:1px;top:757px;width:28px;height:1px;background:#c0c0c0"></div>
<div class="t c" style="left:1px;top:735.5px;width:28px;height:18px;line-height:18px;font-size:15.5px;transform:scaleX(0.85);color:#262626">16</div>
<div style="left:1px;top:758px;width:28px;height:5px;background:#e6e6e6"></div>
<div style="left:29px;top:235px;width:1px;height:528px;background:#9b9b9b"></div>
<div style="left:28px;top:331px;width:2px;height:50px;background:#217346"></div>
<div style="left:833px;top:234px;width:1px;height:530px;background:#a6a6a6"></div>
<div style="left:1px;top:763px;width:833px;height:1px;background:#a6a6a6"></div>
<div style="left:828px;top:235px;width:5px;height:528px;background:#fff"></div>
<div class="t r" style="left:217px;top:274.8px;width:39px;height:18px;line-height:18px;letter-spacing:-0.25px;font-family:'Liberation Mono',monospace;font-size:14.5px;color:#000;letter-spacing:0;"><b>47</b>1</div>
<div class="t r" style="left:260px;top:274.8px;width:39px;height:18px;line-height:18px;letter-spacing:-0.25px;font-family:'Liberation Mono',monospace;font-size:14.5px;color:#000;letter-spacing:0;"><b>227</b></div>
<div class="t r" style="left:303px;top:274.8px;width:39px;height:18px;line-height:18px;letter-spacing:-0.25px;font-family:'Liberation Mono',monospace;font-size:14.5px;color:#000;letter-spacing:0;">103</div>
<div class="t r" style="left:346px;top:274.8px;width:39px;height:18px;line-height:18px;letter-spacing:-0.25px;font-family:'Liberation Mono',monospace;font-size:14.5px;color:#000;letter-spacing:0;"><b>48</b></div>
<div class="t r" style="left:389px;top:274.8px;width:39px;height:18px;line-height:18px;letter-spacing:-0.25px;font-family:'Liberation Mono',monospace;font-size:14.5px;color:#000;letter-spacing:0;"><b>23</b></div>
<div class="t r" style="left:432px;top:274.8px;width:39px;height:18px;line-height:18px;letter-spacing:-0.25px;font-family:'Liberation Mono',monospace;font-size:14.5px;color:#000;letter-spacing:0;">11</div>
<div class="t r" style="left:475px;top:274.8px;width:39px;height:18px;line-height:18px;letter-spacing:-0.25px;font-family:'Liberation Mono',monospace;font-size:14.5px;color:#000;letter-spacing:0;"><b>6</b></div>
<div class="t r" style="left:518px;top:274.8px;width:39px;height:18px;line-height:18px;letter-spacing:-0.25px;font-family:'Liberation Mono',monospace;font-size:14.5px;color:#000;letter-spacing:0;"><b>2</b></div>
<div class="t r" style="left:561px;top:274.8px;width:39px;height:18px;line-height:18px;letter-spacing:-0.25px;font-family:'Liberation Mono',monospace;font-size:14.5px;color:#000;letter-spacing:0;"><b>2</b></div>
<div class="t r" style="left:604px;top:274.8px;width:39px;height:18px;line-height:18px;letter-spacing:-0.25px;font-family:'Liberation Mono',monospace;font-size:14.5px;color:#000;letter-spacing:0;">1</div>
<div class="t r" style="left:73px;top:398px;width:39.5px;height:18px;line-height:18px;letter-spacing:-0.25px;">1</div>
<div class="t r" style="left:116px;top:398px;width:97.5px;height:18px;line-height:18px;letter-spacing:-0.25px;">0.677366175</div>
<div class="t r" style="left:217px;top:398px;width:39.5px;height:18px;line-height:18px;letter-spacing:-0.25px;">0</div>
<div class="t" style="left:263px;top:398px;width:39px;height:18px;line-height:18px;">fail</div>
<div class="t" style="left:306px;top:398px;width:39px;height:18px;line-height:18px;">fail</div>
<div class="t" style="left:349px;top:398px;width:39px;height:18px;line-height:18px;">fail</div>
<div class="t" style="left:392px;top:398px;width:39px;height:18px;line-height:18px;">fail</div>
<div class="t" style="left:435px;top:398px;width:39px;height:18px;line-height:18px;">fail</div>
<div class="t" style="left:478px;top:398px;width:39px;height:18px;line-height:18px;">fail</div>
<div class="t" style="left:521px;top:398px;width:39px;height:18px;line-height:18px;">fail</div>
<div class="t" style="left:564px;top:398px;width:39px;height:18px;line-height:18px;">fail</div>
<div class="t" style="left:607px;top:398px;width:39px;height:18px;line-height:18px;">fail</div>
<div class="t r" style="left:73px;top:436px;width:39.5px;height:18px;line-height:18px;letter-spacing:-0.25px;">2</div>
<div class="t r" style="left:116px;top:436px;width:97.5px;height:18px;line-height:18px;letter-spacing:-0.25px;">0.863759138</div>
<div class="t r" style="left:217px;top:436px;width:39.5px;height:18px;line-height:18px;letter-spacing:-0.25px;">0</div>
<div class="t" style="left:263px;top:436px;width:39px;height:18px;line-height:18px;">fail</div>
<div class="t" style="left:306px;top:436px;width:39px;height:18px;line-height:18px;">fail</div>
<div class="t" style="left:349px;top:436px;width:39px;height:18px;line-height:18px;">fail</div>
<div class="t" style="left:392px;top:436px;width:39px;height:18px;line-height:18px;">fail</div>
<div class="t" style="left:435px;top:436px;width:39px;height:18px;line-height:18px;">fail</div>
<div class="t" style="left:478px;top:436px;width:39px;height:18px;line-height:18px;">fail</div>
<div class="t" style="left:521px;top:436px;width:39px;height:18px;line-height:18px;">fail</div>
<div class="t" style="left:564px;top:436px;width:39px;height:18px;line-height:18px;">fail</div>
<div class="t" style="left:607px;top:436px;width:39px;height:18px;line-height:18px;">fail</div>
<div class="t r" style="left:73px;top:461px;width:39.5px;height:18px;line-height:18px;letter-spacing:-0.25px;">3</div>
<div class="t r" style="left:116px;top:461px;width:97.5px;height:18px;line-height:18px;letter-spacing:-0.25px;">0.720824198</div>
<div class="t r" style="left:217px;top:461px;width:39.5px;height:18px;line-height:18px;letter-spacing:-0.25px;">0</div>
<div class="t" style="left:263px;top:461px;width:39px;height:18px;line-height:18px;">fail</div>
<div class="t" style="left:306px;top:461px;width:39px;height:18px;line-height:18px;">fail</div>
<div class="t" style="left:349px;top:461px;width:39px;height:18px;line-height:18px;">fail</div>
<div class="t" style="left:392px;top:461px;width:39px;height:18px;line-height:18px;">fail</div>
<div class="t" style="left:435px;top:461px;width:39px;height:18px;line-height:18px;">fail</div>
<div class="t" style="left:478px;top:461px;width:39px;height:18px;line-height:18px;">fail</div>
<div class="t" style="left:521px;top:461px;width:39px;height:18px;line-height:18px;">fail</div>
<div class="t" style="left:564px;top:461px;width:39px;height:18px;line-height:18px;">fail</div>
<div class="t" style="left:607px;top:461px;width:39px;height:18px;line-height:18px;">fail</div>
<div class="t r" style="left:73px;top:486px;width:39.5px;height:18px;line-height:18px;letter-spacing:-0.25px;">4</div>
<div class="t r" style="left:116px;top:486px;width:97.5px;height:18px;line-height:18px;letter-spacing:-0.25px;">0.562553669</div>
<div class="t r" style="left:217px;top:486px;width:39.5px;height:18px;line-height:18px;letter-spacing:-0.25px;">0</div>
<div class="t" style="left:263px;top:486px;width:39px;height:18px;line-height:18px;">fail</div>
<div class="t" style="left:306px;top:486px;width:39px;height:18px;line-height:18px;">fail</div>
<div class="t" style="left:349px;top:486px;width:39px;height:18px;line-height:18px;">fail</div>
<div class="t" style="left:392px;top:486px;width:39px;height:18px;line-height:18px;">fail</div>
<div class="t" style="left:435px;top:486px;width:39px;height:18px;line-height:18px;">fail</div>
<div class="t" style="left:478px;top:486px;width:39px;height:18px;line-height:18px;">fail</div>
<div class="t" style="left:521px;top:486px;width:39px;height:18px;line-height:18px;">fail</div>
<div class="t" style="left:564px;top:486px;width:39px;height:18px;line-height:18px;">fail</div>
<div class="t" style="left:607px;top:486px;width:39px;height:18px;line-height:18px;">fail</div>
<div class="t r" style="left:73px;top:511px;width:39.5px;height:18px;line-height:18px;letter-spacing:-0.25px;">5</div>
<div class="t r" style="left:116px;top:511px;width:97.5px;height:18px;line-height:18px;letter-spacing:-0.25px;">0.924256063</div>
<div class="t r" style="left:217px;top:511px;width:39.5px;height:18px;line-height:18px;letter-spacing:-0.25px;">0</div>
<div class="t" style="left:263px;top:511px;width:39px;height:18px;line-height:18px;">fail</div>
<div class="t" style="left:306px;top:511px;width:39px;height:18px;line-height:18px;">fail</div>
<div class="t" style="left:349px;top:511px;width:39px;height:18px;line-height:18px;">fail</div>
<div class="t" style="left:392px;top:511px;width:39px;height:18px;line-height:18px;">fail</div>
<div class="t" style="left:435px;top:511px;width:39px;height:18px;line-height:18px;">fail</div>
<div class="t" style="left:478px;top:511px;width:39px;height:18px;line-height:18px;">fail</div>
<div class="t" style="left:521px;top:511px;width:39px;height:18px;line-height:18px;">fail</div>
<div class="t" style="left:564px;top:511px;width:39px;height:18px;line-height:18px;">fail</div>
<div class="t" style="left:607px;top:511px;width:39px;height:18px;line-height:18px;">fail</div>
<div class="t r" style="left:73px;top:536px;width:39.5px;height:18px;line-height:18px;letter-spacing:-0.25px;">6</div>
<div class="t r" style="left:116px;top:536px;width:97.5px;height:18px;line-height:18px;letter-spacing:-0.25px;">0.975397765</div>
<div class="t r" style="left:217px;top:536px;width:39.5px;height:18px;line-height:18px;letter-spacing:-0.25px;">0</div>
<div class="t" style="left:263px;top:536px;width:39px;height:18px;line-height:18px;">fail</div>
<div class="t" style="left:306px;top:536px;width:39px;height:18px;line-height:18px;">fail</div>
<div class="t" style="left:349px;top:536px;width:39px;height:18px;line-height:18px;">fail</div>
<div class="t" style="left:392px;top:536px;width:39px;height:18px;line-height:18px;">fail</div>
<div class="t" style="left:435px;top:536px;width:39px;height:18px;line-height:18px;">fail</div>
<div class="t" style="left:478px;top:536px;width:39px;height:18px;line-height:18px;">fail</div>
<div class="t" style="left:521px;top:536px;width:39px;height:18px;line-height:18px;">fail</div>
<div class="t" style="left:564px;top:536px;width:39px;height:18px;line-height:18px;">fail</div>
<div class="t" style="left:607px;top:536px;width:39px;height:18px;line-height:18px;">fail</div>
<div class="t r" style="left:73px;top:561px;width:39.5px;height:18px;line-height:18px;letter-spacing:-0.25px;">7</div>
<div class="t r" style="left:116px;top:561px;width:97.5px;height:18px;line-height:18px;letter-spacing:-0.25px;">0.484276219</div>
<div class="t r" style="left:217px;top:561px;width:39.5px;height:18px;line-height:18px;letter-spacing:-0.25px;">1</div>
<div class="t r" style="left:260px;top:561px;width:39.5px;height:18px;line-height:18px;letter-spacing:-0.25px;">1</div>
<div class="t r" style="left:303px;top:561px;width:39.5px;height:18px;line-height:18px;letter-spacing:-0.25px;">0</div>
<div class="t" style="left:349px;top:561px;width:39px;height:18px;line-height:18px;">fail</div>
<div class="t" style="left:392px;top:561px;width:39px;height:18px;line-height:18px;">fail</div>
<div class="t" style="left:435px;top:561px;width:39px;height:18px;line-height:18px;">fail</div>
<div class="t" style="left:478px;top:561px;width:39px;height:18px;line-height:18px;">fail</div>
<div class="t" style="left:521px;top:561px;width:39px;height:18px;line-height:18px;">fail</div>
<div class="t" style="left:564px;top:561px;width:39px;height:18px;line-height:18px;">fail</div>
<div class="t" style="left:607px;top:561px;width:39px;height:18px;line-height:18px;">fail</div>
<div class="t r" style="left:73px;top:586px;width:39.5px;height:18px;line-height:18px;letter-spacing:-0.25px;">8</div>
<div class="t r" style="left:116px;top:586px;width:97.5px;height:18px;line-height:18px;letter-spacing:-0.25px;">0.102271724</div>
<div class="t r" style="left:217px;top:586px;width:39.5px;height:18px;line-height:18px;letter-spacing:-0.25px;">1</div>
<div class="t r" style="left:260px;top:586px;width:39.5px;height:18px;line-height:18px;letter-spacing:-0.25px;">0</div>
<div class="t" style="left:306px;top:586px;width:39px;height:18px;line-height:18px;">fail</div>
<div class="t" style="left:349px;top:586px;width:39px;height:18px;line-height:18px;">fail</div>
<div class="t" style="left:392px;top:586px;width:39px;height:18px;line-height:18px;">fail</div>
<div class="t" style="left:435px;top:586px;width:39px;height:18px;line-height:18px;">fail</div>
<div class="t" style="left:478px;top:586px;width:39px;height:18px;line-height:18px;">fail</div>
<div class="t" style="left:521px;top:586px;width:39px;height:18px;line-height:18px;">fail</div>
<div class="t" style="left:564px;top:586px;width:39px;height:18px;line-height:18px;">fail</div>
<div class="t" style="left:607px;top:586px;width:39px;height:18px;line-height:18px;">fail</div>
<div class="t r" style="left:73px;top:611px;width:39.5px;height:18px;line-height:18px;letter-spacing:-0.25px;">9</div>
<div class="t r" style="left:116px;top:611px;width:97.5px;height:18px;line-height:18px;letter-spacing:-0.25px;">0.044786543</div>
<div class="t r" style="left:217px;top:611px;width:39.5px;height:18px;line-height:18px;letter-spacing:-0.25px;">1</div>
<div class="t r" style="left:260px;top:611px;width:39.5px;height:18px;line-height:18px;letter-spacing:-0.25px;">0</div>
<div class="t" style="left:306px;top:611px;width:39px;height:18px;line-height:18px;">fail</div>
<div class="t" style="left:349px;top:611px;width:39px;height:18px;line-height:18px;">fail</div>
<div class="t" style="left:392px;top:611px;width:39px;height:18px;line-height:18px;">fail</div>
<div class="t" style="left:435px;top:611px;width:39px;height:18px;line-height:18px;">fail</div>
<div class="t" style="left:478px;top:611px;width:39px;height:18px;line-height:18px;">fail</div>
<div class="t" style="left:521px;top:611px;width:39px;height:18px;line-height:18px;">fail</div>
<div class="t" style="left:564px;top:611px;width:39px;height:18px;line-height:18px;">fail</div>
<div class="t" style="left:607px;top:611px;width:39px;height:18px;line-height:18px;">fail</div>
<div class="t r" style="left:73px;top:636px;width:39.5px;height:18px;line-height:18px;letter-spacing:-0.25px;">10</div>
<div class="t r" style="left:116px;top:636px;width:97.5px;height:18px;line-height:18px;letter-spacing:-0.25px;">0.070034008</div>
<div class="t r" style="left:217px;top:636px;width:39.5px;height:18px;line-height:18px;letter-spacing:-0.25px;">1</div>
<div class="t r" style="left:260px;top:636px;width:39.5px;height:18px;line-height:18px;letter-spacing:-0.25px;">0</div>
<div class="t" style="left:306px;top:636px;width:39px;height:18px;line-height:18px;">fail</div>
<div class="t" style="left:349px;top:636px;width:39px;height:18px;line-height:18px;">fail</div>
<div class="t" style="left:392px;top:636px;width:39px;height:18px;line-height:18px;">fail</div>
<div class="t" style="left:435px;top:636px;width:39px;height:18px;line-height:18px;">fail</div>
<div class="t" style="left:478px;top:636px;width:39px;height:18px;line-height:18px;">fail</div>
<div class="t" style="left:521px;top:636px;width:39px;height:18px;line-height:18px;">fail</div>
<div class="t" style="left:564px;top:636px;width:39px;height:18px;line-height:18px;">fail</div>
<div class="t" style="left:607px;top:636px;width:39px;height:18px;line-height:18px;">fail</div>
<div class="t r" style="left:73px;top:661px;width:39.5px;height:18px;line-height:18px;letter-spacing:-0.25px;">11</div>
<div class="t r" style="left:116px;top:661px;width:97.5px;height:18px;line-height:18px;letter-spacing:-0.25px;">0.315909654</div>
<div class="t r" style="left:217px;top:661px;width:39.5px;height:18px;line-height:18px;letter-spacing:-0.25px;">1</div>
<div class="t r" style="left:260px;top:661px;width:39.5px;height:18px;line-height:18px;letter-spacing:-0.25px;">1</div>
<div class="t r" style="left:303px;top:661px;width:39.5px;height:18px;line-height:18px;letter-spacing:-0.25px;">0</div>
<div class="t" style="left:349px;top:661px;width:39px;height:18px;line-height:18px;">fail</div>
<div class="t" style="left:392px;top:661px;width:39px;height:18px;line-height:18px;">fail</div>
<div class="t" style="left:435px;top:661px;width:39px;height:18px;line-height:18px;">fail</div>
<div class="t" style="left:478px;top:661px;width:39px;height:18px;line-height:18px;">fail</div>
<div class="t" style="left:521px;top:661px;width:39px;height:18px;line-height:18px;">fail</div>
<div class="t" style="left:564px;top:661px;width:39px;height:18px;line-height:18px;">fail</div>
<div class="t" style="left:607px;top:661px;width:39px;height:18px;line-height:18px;">fail</div>
<div class="t r" style="left:73px;top:686px;width:39.5px;height:18px;line-height:18px;letter-spacing:-0.25px;">12</div>
<div class="t r" style="left:116px;top:686px;width:97.5px;height:18px;line-height:18px;letter-spacing:-0.25px;">0.152576996</div>
<div class="t r" style="left:217px;top:686px;width:39.5px;height:18px;line-height:18px;letter-spacing:-0.25px;">1</div>
<div class="t r" style="left:260px;top:686px;width:39.5px;height:18px;line-height:18px;letter-spacing:-0.25px;">0</div>
<div class="t" style="left:306px;top:686px;width:39px;height:18px;line-height:18px;">fail</div>
<div class="t" style="left:349px;top:686px;width:39px;height:18px;line-height:18px;">fail</div>
<div class="t" style="left:392px;top:686px;width:39px;height:18px;line-height:18px;">fail</div>
<div class="t" style="left:435px;top:686px;width:39px;height:18px;line-height:18px;">fail</div>
<div class="t" style="left:478px;top:686px;width:39px;height:18px;line-height:18px;">fail</div>
<div class="t" style="left:521px;top:686px;width:39px;height:18px;line-height:18px;">fail</div>
<div class="t" style="left:564px;top:686px;width:39px;height:18px;line-height:18px;">fail</div>
<div class="t" style="left:607px;top:686px;width:39px;height:18px;line-height:18px;">fail</div>
<div class="t r" style="left:73px;top:711px;width:39.5px;height:18px;line-height:18px;letter-spacing:-0.25px;">13</div>
<div class="t r" style="left:116px;top:711px;width:97.5px;height:18px;line-height:18px;letter-spacing:-0.25px;">0.903328282</div>
<div class="t r" style="left:217px;top:711px;width:39.5px;height:18px;line-height:18px;letter-spacing:-0.25px;">0</div>
<div class="t" style="left:263px;top:711px;width:39px;height:18px;line-height:18px;">fail</div>
<div class="t" style="left:306px;top:711px;width:39px;height:18px;line-height:18px;">fail</div>
<div class="t" style="left:349px;top:711px;width:39px;height:18px;line-height:18px;">fail</div>
<div class="t" style="left:392px;top:711px;width:39px;height:18px;line-height:18px;">fail</div>
<div class="t" style="left:435px;top:711px;width:39px;height:18px;line-height:18px;">fail</div>
<div class="t" style="left:478px;top:711px;width:39px;height:18px;line-height:18px;">fail</div>
<div class="t" style="left:521px;top:711px;width:39px;height:18px;line-height:18px;">fail</div>
<div class="t" style="left:564px;top:711px;width:39px;height:18px;line-height:18px;">fail</div>
<div class="t" style="left:607px;top:711px;width:39px;height:18px;line-height:18px;">fail</div>
<div class="t r" style="left:73px;top:736px;width:39.5px;height:18px;line-height:18px;letter-spacing:-0.25px;">14</div>
<div class="t r" style="left:116px;top:736px;width:97.5px;height:18px;line-height:18px;letter-spacing:-0.25px;">0.394940268</div>
<div class="t r" style="left:217px;top:736px;width:39.5px;height:18px;line-height:18px;letter-spacing:-0.25px;">1</div>
<div class="t r" style="left:260px;top:736px;width:39.5px;height:18px;line-height:18px;letter-spacing:-0.25px;">1</div>
<div class="t r" style="left:303px;top:736px;width:39.5px;height:18px;line-height:18px;letter-spacing:-0.25px;">0</div>
<div class="t" style="left:349px;top:736px;width:39px;height:18px;line-height:18px;">fail</div>
<div class="t" style="left:392px;top:736px;width:39px;height:18px;line-height:18px;">fail</div>
<div class="t" style="left:435px;top:736px;width:39px;height:18px;line-height:18px;">fail</div>
<div class="t" style="left:478px;top:736px;width:39px;height:18px;line-height:18px;">fail</div>
<div class="t" style="left:521px;top:736px;width:39px;height:18px;line-height:18px;">fail</div>
<div class="t" style="left:564px;top:736px;width:39px;height:18px;line-height:18px;">fail</div>
<div class="t" style="left:607px;top:736px;width:39px;height:18px;line-height:18px;">fail</div>
<div style="left:645px;top:329px;width:141px;height:54px;border:2px solid #217346;background:#fff"></div>
<div style="left:781px;top:378px;width:6px;height:6px;background:#217346;border-left:1px solid #fff;border-top:1px solid #fff"></div>
<div style="left:837px;top:212px;width:15px;height:552px;background:#d4d4d4"></div>
<div style="left:837px;top:212px;width:15px;height:15px;background:#fff;border:1px solid #ababab"></div>
<svg style="left:841px;top:217px" width="7" height="4" viewBox="0 0 7 4" ><path d="M0 4H7L3.5 0Z" fill="#777"/></svg>
<div style="left:837px;top:227px;width:15px;height:17px;background:#fff;border:1px solid #ababab"></div>
<div style="left:837px;top:749px;width:15px;height:15px;background:#fff;border:1px solid #ababab"></div>
<svg style="left:841px;top:755px" width="7" height="4" viewBox="0 0 7 4" ><path d="M0 0H7L3.5 4Z" fill="#777"/></svg>
<svg style="left:27.5px;top:773px" width="5" height="7" viewBox="0 0 5 7" ><path d="M4.6 0V6.6L0 3.3Z" fill="#c2c2c2"/></svg>
<svg style="left:57px;top:773px" width="5" height="7" viewBox="0 0 5 7" ><path d="M0 0V6.6L4.6 3.3Z" fill="#c2c2c2"/></svg>
<div style="left:101px;top:763px;width:73px;height:25px;background:#fff;border-left:1px solid #ababab;border-right:1px solid #ababab"></div>
<div style="left:101px;top:786px;width:73px;height:2px;background:#217346"></div>
<div class="t c" style="left:102px;top:767.7px;width:71px;height:18px;line-height:18px;font-size:13.5px;color:#217346;letter-spacing:0.2px">Sheet1</div>
<svg style="left:206.6px;top:768.8px" width="16.4" height="16.4" viewBox="0 0 16.4 16.4" ><circle cx="8.2" cy="8.2" r="7.6" fill="none" stroke="#777" stroke-width="1.1"/><path d="M8.2 4.4V12M4.4 8.2H12" stroke="#666" stroke-width="1.8"/></svg>
<svg style="left:513.3px;top:772.5px" width="2" height="10" viewBox="0 0 2 10" ><rect width="1.6" height="1.6" fill="#a0a0a0"/><rect y="3.6" width="1.6" height="1.6" fill="#a0a0a0"/><rect y="7.2" width="1.6" height="1.6" fill="#a0a0a0"/></svg>
<div style="left:530px;top:770px;width:306px;height:15px;background:#d4d4d4"></div>
<div style="left:530px;top:770px;width:15px;height:15px;background:#fff;border:1px solid #ababab"></div>
<svg style="left:535px;top:774px" width="4" height="7" viewBox="0 0 4 7" ><path d="M4 0V7L0 3.5Z" fill="#606060"/></svg>
<div style="left:545px;top:770px;width:255px;height:15px;background:#fff;border-top:1px solid #ababab;border-bottom:1px solid #ababab;border-right:1px solid #ababab"></div>
<div style="left:821px;top:770px;width:15px;height:15px;background:#fff;border:1px solid #ababab"></div>
<svg style="left:827px;top:774px" width="4" height="7" viewBox="0 0 4 7" ><path d="M0 0V7L4 3.5Z" fill="#606060"/></svg>
<div style="left:1px;top:791px;width:854px;height:1px;background:#c6c6c6"></div>
<div style="left:1px;top:792px;width:854px;height:21px;background:#f3f3f3"></div>
<div style="left:552px;top:792px;width:38px;height:21px;background:#c8c8c8"></div>
<svg style="left:563.8px;top:794.8px" width="13" height="12.6" viewBox="0 0 13 12.6" ><rect x="0.6" y="0.6" width="12" height="11.6" fill="#e8e8e8" stroke="#707070" stroke-width="1.2"/><path d="M4.6 0.6V12.2M8.6 0.6V12.2M0.6 4.5H12.6M0.6 8.4H12.6" stroke="#707070" stroke-width="1.2"/></svg>
<svg style="left:601.8px;top:794.8px" width="14" height="12.6" viewBox="0 0 14 12.6" ><rect x="0.6" y="0.6" width="13" height="11.6" fill="#fff" stroke="#707070" stroke-width="1.2"/><rect x="3.6" y="2.8" width="7" height="7.2" fill="none" stroke="#707070"/><path d="M5.2 4.8H9M5.2 6.4H9M5.2 8H9" stroke="#707070" stroke-width="0.9"/></svg>
<svg style="left:639.6px;top:794.8px" width="14" height="12.6" viewBox="0 0 14 12.6" ><rect x="0.6" y="0.6" width="13" height="11.6" fill="#fff" stroke="#707070" stroke-width="1.2"/><path d="M4.7 0.6V7.6M8.8 0.6V7.6M0.6 7.6H8.8" fill="none" stroke="#707070" stroke-width="1.1"/></svg>
<div style="left:671px;top:801px;width:6px;height:2px;background:#555"></div>
<div style="left:681px;top:802px;width:100px;height:1px;background:#a0a0a0"></div>
<div style="left:729px;top:796px;width:5px;height:11px;background:#666"></div>
<svg style="left:784.5px;top:798px" width="8" height="8" viewBox="0 0 8 8" ><path d="M0 4H7.4M3.7 0.3V7.7" stroke="#555" stroke-width="1.7"/></svg>
<div class="t" style="left:803.5px;top:793px;width:40px;height:18px;line-height:18px;font-size:12.5px;color:#333">100%</div>
<div style="left:0px;top:0px;width:1px;height:814px;background:#217346"></div>
<div style="left:855px;top:0px;width:1px;height:814px;background:#217346"></div>
<div style="left:0px;top:813px;width:856px;height:1px;background:#217346"></div>
<svg id="jp" style="left:0;top:0" width="856" height="814" viewBox="0 0 856 814">
<text x="288.6" y="22.06" fill="#fff" textLength="226" lengthAdjust="spacingAndGlyphs">1000人居たら10回連続コインの表出る奴.xlsx</text>
<text x="523.5" y="22.06" fill="#fff">-</text>
<text x="536" y="22.06" fill="#fff" textLength="29" lengthAdjust="spacingAndGlyphs">Excel</text>
<text x="604.6" y="21.06" fill="#217346" textLength="45" lengthAdjust="spacingAndGlyphs">サインイン</text>
<text x="12.4" y="54.56" fill="#fff" textLength="35" lengthAdjust="spacingAndGlyphs">ファイル</text>
<text x="73.5" y="54.56" fill="#fff" textLength="30" lengthAdjust="spacingAndGlyphs">ホーム</text>
<text x="130.8" y="54.56" fill="#fff" textLength="23.5" lengthAdjust="spacingAndGlyphs">挿入</text>
<text x="181.6" y="54.56" fill="#fff" textLength="80" lengthAdjust="spacingAndGlyphs">ページ レイアウト</text>
<text x="337.75" y="54.56" fill="#fff" textLength="29" lengthAdjust="spacingAndGlyphs">データ</text>
<text x="393" y="54.56" fill="#fff" textLength="24" lengthAdjust="spacingAndGlyphs">校閲</text>
<text x="443.7" y="54.56" fill="#fff" textLength="24" lengthAdjust="spacingAndGlyphs">表示</text>
<text x="494.4" y="54.56" fill="#fff" textLength="31" lengthAdjust="spacingAndGlyphs">ヘルプ</text>
<text x="579.45" y="54.56" fill="#fff" textLength="160" lengthAdjust="spacingAndGlyphs">実行したい作業を入力してください</text>
<text x="807.7" y="54.56" fill="#fff" textLength="22.5" lengthAdjust="spacingAndGlyphs">共有</text>
<text x="287" y="54.56" fill="#217346" textLength="23.7" lengthAdjust="spacingAndGlyphs">数式</text>
<text x="13" y="118.56" fill="#262626" textLength="35" lengthAdjust="spacingAndGlyphs">関数の</text>
<text x="17.8" y="133.16" fill="#262626" textLength="23.5" lengthAdjust="spacingAndGlyphs">挿入</text>
<text x="72.5" y="85.06" fill="#262626" textLength="58.5" lengthAdjust="spacingAndGlyphs">オート SUM</text>
<text x="72.7" y="107.81" fill="#262626" textLength="78.5" lengthAdjust="spacingAndGlyphs">最近使った関数</text>
<text x="72.7" y="130.56" fill="#262626" textLength="24.5" lengthAdjust="spacingAndGlyphs">財務</text>
<text x="120.2" y="154.06" fill="#444" textLength="64" lengthAdjust="spacingAndGlyphs">関数ライブラリ</text>
<text x="189" y="85.06" fill="#262626" textLength="23" lengthAdjust="spacingAndGlyphs">論理</text>
<text x="188.3" y="107.81" fill="#262626" textLength="60" lengthAdjust="spacingAndGlyphs">文字列操作</text>
<text x="187.6" y="130.56" fill="#262626" textLength="53.5" lengthAdjust="spacingAndGlyphs">日付/時刻</text>
<text x="322.5" y="118.56" fill="#262626" textLength="24" lengthAdjust="spacingAndGlyphs">名前</text>
<text x="316.8" y="133.16" fill="#262626" textLength="34.5" lengthAdjust="spacingAndGlyphs">の管理</text>
<text x="377.5" y="85.06" fill="#262626" textLength="57" lengthAdjust="spacingAndGlyphs">名前の定義</text>
<text x="377.3" y="107.81" fill="#a8a8a8" textLength="59" lengthAdjust="spacingAndGlyphs">数式で使用</text>
<text x="377.25" y="130.56" fill="#262626" textLength="88.5" lengthAdjust="spacingAndGlyphs">選択範囲から作成</text>
<text x="355.9" y="154.06" fill="#444" textLength="74.3" lengthAdjust="spacingAndGlyphs">定義された名前</text>
<text x="512.3" y="85.06" fill="#262626" textLength="82" lengthAdjust="spacingAndGlyphs">参照元のトレース</text>
<text x="512.3" y="107.81" fill="#262626" textLength="82" lengthAdjust="spacingAndGlyphs">参照先のトレース</text>
<text x="511.7" y="130.56" fill="#262626" textLength="93.4" lengthAdjust="spacingAndGlyphs">トレース矢印の削除</text>
<text x="562.7" y="154.06" fill="#444" textLength="79.3" lengthAdjust="spacingAndGlyphs">ワークシート分析</text>
<text x="676.9" y="118.56" fill="#262626" textLength="33.5" lengthAdjust="spacingAndGlyphs">ウォッチ</text>
<text x="671.65" y="133.16" fill="#262626" textLength="43" lengthAdjust="spacingAndGlyphs">ウィンドウ</text>
<text x="735.4" y="118.56" fill="#262626" textLength="47.3" lengthAdjust="spacingAndGlyphs">計算方法</text>
<text x="737.6" y="133.16" fill="#262626" textLength="34.6" lengthAdjust="spacingAndGlyphs">の設定</text>
<text x="746.1" y="154.06" fill="#444" textLength="47.9" lengthAdjust="spacingAndGlyphs">計算方法</text>
<text class="m" x="648.9" y="262.51" textLength="120" lengthAdjust="spacingAndGlyphs">←ここに１以上の</text>
<text class="m" x="649" y="287.31" textLength="121" lengthAdjust="spacingAndGlyphs">数字が出たら10連</text>
<text class="m" x="649" y="311.91" textLength="120" lengthAdjust="spacingAndGlyphs">続でたということ</text>
<text class="m" x="118.7" y="361.16" textLength="45" lengthAdjust="spacingAndGlyphs">乱数↓</text>
<text class="m" x="219.2" y="361.16" textLength="38" lengthAdjust="spacingAndGlyphs">1回目</text>
<text class="m" x="263.4" y="361.16" textLength="38" lengthAdjust="spacingAndGlyphs">2回目</text>
<text class="m" x="306.3" y="361.16" textLength="38" lengthAdjust="spacingAndGlyphs">3回目</text>
<text class="m" x="349.6" y="361.16" textLength="38" lengthAdjust="spacingAndGlyphs">4回目</text>
<text class="m" x="392.2" y="361.16" textLength="38" lengthAdjust="spacingAndGlyphs">5回目</text>
<text class="m" x="435.2" y="361.16" textLength="38" lengthAdjust="spacingAndGlyphs">6回目</text>
<text class="m" x="478.2" y="361.16" textLength="38" lengthAdjust="spacingAndGlyphs">7回目</text>
<text class="m" x="521.4" y="361.16" textLength="38" lengthAdjust="spacingAndGlyphs">8回目</text>
<text class="m" x="564.1" y="361.16" textLength="38" lengthAdjust="spacingAndGlyphs">9回目</text>
<text class="m" x="606.2" y="347.81" textLength="31" lengthAdjust="spacingAndGlyphs">10回</text>
<text class="m" x="606.5" y="372.81">目</text>
</svg>
<span class="h" style="left:290px;top:12px;width:226px;height:12px;font-size:12px;line-height:12px">1000人居たら10回連続コインの表出る奴.xlsx</span>
<span class="h" style="left:524px;top:12px;width:3px;height:12px;font-size:12px;line-height:12px">-</span>
<span class="h" style="left:537px;top:12px;width:28px;height:12px;font-size:12px;line-height:12px">Excel</span>
<span class="h" style="left:605px;top:10px;width:44px;height:12px;font-size:12px;line-height:12px">サインイン</span>
<span class="h" style="left:13px;top:44px;width:34px;height:12px;font-size:12px;line-height:12px">ファイル</span>
<span class="h" style="left:74px;top:44px;width:29px;height:12px;font-size:12px;line-height:12px">ホーム</span>
<span class="h" style="left:131px;top:44px;width:23px;height:12px;font-size:12px;line-height:12px">挿入</span>
<span class="h" style="left:182px;top:44px;width:79px;height:12px;font-size:12px;line-height:12px">ページ レイアウト</span>
<span class="h" style="left:338px;top:44px;width:28px;height:12px;font-size:12px;line-height:12px">データ</span>
<span class="h" style="left:393px;top:44px;width:23px;height:12px;font-size:12px;line-height:12px">校閲</span>
<span class="h" style="left:444px;top:44px;width:24px;height:12px;font-size:12px;line-height:12px">表示</span>
<span class="h" style="left:495px;top:44px;width:30px;height:12px;font-size:12px;line-height:12px">ヘルプ</span>
<span class="h" style="left:580px;top:44px;width:159px;height:12px;font-size:12px;line-height:12px">実行したい作業を入力してください</span>
<span class="h" style="left:808px;top:44px;width:22px;height:12px;font-size:12px;line-height:12px">共有</span>
<span class="h" style="left:287px;top:44px;width:23px;height:12px;font-size:12px;line-height:12px">数式</span>
<span class="h" style="left:14px;top:108px;width:34px;height:12px;font-size:12px;line-height:12px">関数の</span>
<span class="h" style="left:18px;top:123px;width:23px;height:12px;font-size:12px;line-height:12px">挿入</span>
<span class="h" style="left:73px;top:74px;width:58px;height:12px;font-size:12px;line-height:12px">オート SUM</span>
<span class="h" style="left:73px;top:97px;width:78px;height:12px;font-size:12px;line-height:12px">最近使った関数</span>
<span class="h" style="left:73px;top:120px;width:24px;height:12px;font-size:12px;line-height:12px">財務</span>
<span class="h" style="left:121px;top:144px;width:63px;height:12px;font-size:12px;line-height:12px">関数ライブラリ</span>
<span class="h" style="left:189px;top:74px;width:22px;height:12px;font-size:12px;line-height:12px">論理</span>
<span class="h" style="left:189px;top:97px;width:59px;height:12px;font-size:12px;line-height:12px">文字列操作</span>
<span class="h" style="left:189px;top:120px;width:51px;height:12px;font-size:12px;line-height:12px">日付/時刻</span>
<span class="h" style="left:323px;top:108px;width:23px;height:12px;font-size:12px;line-height:12px">名前</span>
<span class="h" style="left:318px;top:123px;width:34px;height:12px;font-size:12px;line-height:12px">の管理</span>
<span class="h" style="left:378px;top:74px;width:56px;height:12px;font-size:12px;line-height:12px">名前の定義</span>
<span class="h" style="left:378px;top:97px;width:58px;height:12px;font-size:12px;line-height:12px">数式で使用</span>
<span class="h" style="left:378px;top:120px;width:88px;height:12px;font-size:12px;line-height:12px">選択範囲から作成</span>
<span class="h" style="left:356px;top:144px;width:74px;height:12px;font-size:12px;line-height:12px">定義された名前</span>
<span class="h" style="left:512px;top:74px;width:81px;height:12px;font-size:12px;line-height:12px">参照元のトレース</span>
<span class="h" style="left:512px;top:97px;width:81px;height:12px;font-size:12px;line-height:12px">参照先のトレース</span>
<span class="h" style="left:513px;top:120px;width:92px;height:12px;font-size:12px;line-height:12px">トレース矢印の削除</span>
<span class="h" style="left:564px;top:144px;width:78px;height:12px;font-size:12px;line-height:12px">ワークシート分析</span>
<span class="h" style="left:678px;top:108px;width:32px;height:12px;font-size:12px;line-height:12px">ウォッチ</span>
<span class="h" style="left:672px;top:123px;width:42px;height:12px;font-size:12px;line-height:12px">ウィンドウ</span>
<span class="h" style="left:736px;top:108px;width:47px;height:12px;font-size:12px;line-height:12px">計算方法</span>
<span class="h" style="left:738px;top:123px;width:34px;height:12px;font-size:12px;line-height:12px">の設定</span>
<span class="h" style="left:746px;top:144px;width:47px;height:12px;font-size:12px;line-height:12px">計算方法</span>
<span class="h" style="left:649px;top:250px;width:119px;height:15px;font-size:15px;line-height:15px">←ここに１以上の</span>
<span class="h" style="left:649px;top:274px;width:120px;height:15px;font-size:15px;line-height:15px">数字が出たら10連</span>
<span class="h" style="left:649px;top:299px;width:119px;height:15px;font-size:15px;line-height:15px">続でたということ</span>
<span class="h" style="left:119px;top:348px;width:44px;height:15px;font-size:15px;line-height:15px">乱数↓</span>
<span class="h" style="left:221px;top:348px;width:36px;height:15px;font-size:15px;line-height:15px">1回目</span>
<span class="h" style="left:264px;top:348px;width:37px;height:15px;font-size:15px;line-height:15px">2回目</span>
<span class="h" style="left:307px;top:348px;width:37px;height:15px;font-size:15px;line-height:15px">3回目</span>
<span class="h" style="left:350px;top:348px;width:38px;height:15px;font-size:15px;line-height:15px">4回目</span>
<span class="h" style="left:393px;top:348px;width:37px;height:15px;font-size:15px;line-height:15px">5回目</span>
<span class="h" style="left:436px;top:348px;width:37px;height:15px;font-size:15px;line-height:15px">6回目</span>
<span class="h" style="left:479px;top:348px;width:37px;height:15px;font-size:15px;line-height:15px">7回目</span>
<span class="h" style="left:522px;top:348px;width:37px;height:15px;font-size:15px;line-height:15px">8回目</span>
<span class="h" style="left:565px;top:348px;width:37px;height:15px;font-size:15px;line-height:15px">9回目</span>
<span class="h" style="left:608px;top:335px;width:29px;height:15px;font-size:15px;line-height:15px">10回</span>
<span class="h" style="left:609px;top:360px;width:12px;height:15px;font-size:15px;line-height:15px">目</span>
</div>
</body></html>
